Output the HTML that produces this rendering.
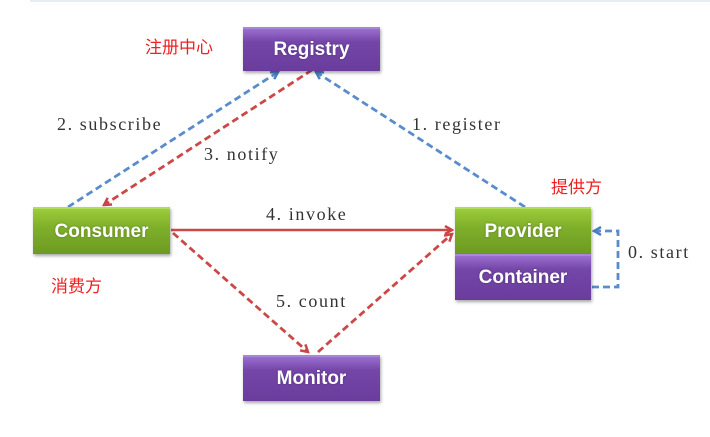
<!DOCTYPE html>
<html><head><meta charset="utf-8"><style>
body{margin:0;width:710px;height:437px;background:#fff;overflow:hidden;position:relative;font-family:"Liberation Sans",sans-serif}
.b{position:absolute;color:#fff;font-weight:bold;font-size:19px;display:flex;align-items:center;justify-content:center;box-shadow:1px 2px 3px rgba(0,0,0,.35);text-shadow:0 0 2px rgba(0,0,0,.3)}
.p{background:linear-gradient(#9a6ed0,#7446a8 30%,#6a3c9c);border-top:2px solid #a987d8}
.g{background:linear-gradient(#9bcc3c,#7fb02a 40%,#6d9a22);border-top:2px solid #b2dc5c}
.t{position:absolute;font-family:"Liberation Serif",serif;font-size:18px;color:#333;letter-spacing:1.6px;white-space:nowrap}
.c{position:absolute;color:#f02020;font-size:17px;font-family:"Liberation Sans","Noto Sans CJK SC",sans-serif}
</style></head><body>
<div style="position:absolute;left:30px;top:0;width:680px;height:2px;background:#e8edf3"></div>
<svg width="710" height="437" style="position:absolute;left:0;top:0">
<defs>
<marker id="ab" markerWidth="10" markerHeight="10" refX="8" refY="5" orient="auto" markerUnits="userSpaceOnUse"><path d="M1,1 L8,5 L1,9" fill="none" stroke="#4a7fc4" stroke-width="2.5"/></marker>
<marker id="ar" markerWidth="10" markerHeight="10" refX="8" refY="5" orient="auto" markerUnits="userSpaceOnUse"><path d="M1,1 L8,5 L1,9" fill="none" stroke="#cc4444" stroke-width="2.5"/></marker>
</defs>
<g fill="none" stroke-width="2.8" stroke-dasharray="7,4">
<line x1="68" y1="207" x2="278" y2="72" stroke="#5a8ccc" marker-end="url(#ab)"/>
<line x1="312" y1="70" x2="104" y2="205" stroke="#cc4848" marker-end="url(#ar)"/>
<line x1="525" y1="207" x2="316" y2="72" stroke="#5a8ccc" marker-end="url(#ab)"/>
<line x1="173" y1="233" x2="308" y2="352" stroke="#cc4848" marker-end="url(#ar)"/>
<line x1="318" y1="352" x2="452" y2="234" stroke="#cc4848" marker-end="url(#ar)"/>
<polyline points="592,287 618,287 618,231 594,231" stroke="#5a8ccc" marker-end="url(#ab)"/>
</g>
<line x1="171" y1="230" x2="452" y2="230" stroke="#cc4848" stroke-width="2.5" marker-end="url(#ar)"/>
</svg>
<div class="b p" style="left:243px;top:27px;width:137px;height:42px">Registry</div>
<div class="b g" style="left:33px;top:207px;width:137px;height:45px">Consumer</div>
<div class="b g" style="left:455px;top:207px;width:136px;height:45px">Provider</div>
<div class="b p" style="left:455px;top:254px;width:136px;height:44px">Container</div>
<div class="b p" style="left:243px;top:355px;width:137px;height:44px">Monitor</div>
<div class="t" style="left:57px;top:114px">2. subscribe</div>
<div class="t" style="left:204px;top:144px">3. notify</div>
<div class="t" style="left:412px;top:114px">1. register</div>
<div class="t" style="left:266px;top:204px">4. invoke</div>
<div class="t" style="left:276px;top:291px">5. count</div>
<div class="t" style="left:628px;top:242px">0. start</div>
<div class="c" style="left:145px;top:33px">注册中心</div>
<div class="c" style="left:51px;top:272px">消费方</div>
<div class="c" style="left:551px;top:173px">提供方</div>
</body></html>
